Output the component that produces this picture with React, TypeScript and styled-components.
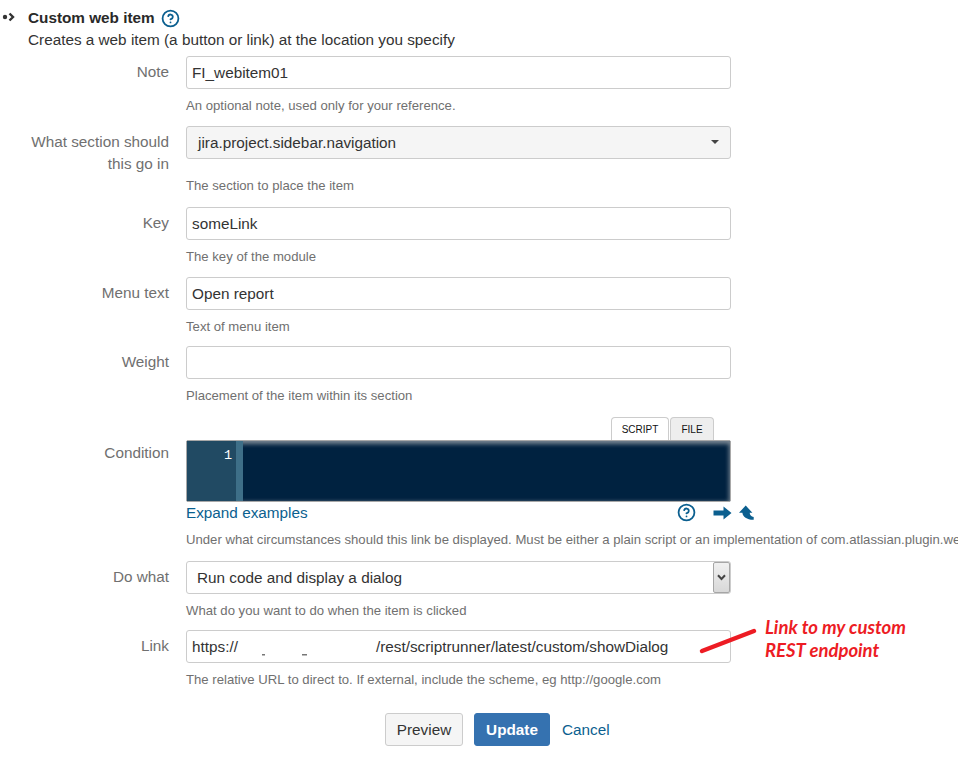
import React from 'react';
import styled, { createGlobalStyle } from 'styled-components';
import { CircleHelp } from 'lucide-react';

const GlobalStyle = createGlobalStyle`
  html, body {
    margin: 0;
    padding: 0;
    background: #fff;
    overflow: hidden;
  }
  body {
    font-family: "Liberation Sans", Arial, sans-serif;
    color: #333;
  }
`;

const Page = styled.div`
  width: 958px;
  height: 758px;
  overflow: hidden;
  padding-top: 8px;
  box-sizing: border-box;
`;

const Header = styled.div`
  display: grid;
  grid-template-columns: 28px 1fr;
  margin-bottom: 6px;
`;

const Bullet = styled.svg`
  width: 16px;
  height: 10px;
  margin-top: 4px;
`;

const TitleLine = styled.div`
  display: flex;
  align-items: center;
  gap: 6px;
  height: 20px;
  font-size: 15.3px;
  font-weight: bold;
  color: #292929;
`;

const Subtitle = styled.div`
  grid-column: 2;
  margin-top: 2px;
  font-size: 15.3px;
  line-height: 20px;
`;

const Row = styled.div<{ $gap?: number }>`
  display: grid;
  grid-template-columns: 169px 545px;
  column-gap: 17px;
  margin-bottom: ${(p) => p.$gap ?? 11}px;
`;

const Label = styled.div<{ $top?: number }>`
  padding-top: ${(p) => p.$top ?? 5}px;
  font-size: 15.3px;
  line-height: 22px;
  color: #707070;
  text-align: right;
`;

const Control = styled.div`
  position: relative;
  min-width: 0;
  padding-bottom: 6px;
`;

const TextBox = styled.div<{ $grey?: boolean; $indent?: number }>`
  position: relative;
  display: flex;
  align-items: center;
  height: 33px;
  box-sizing: border-box;
  padding-left: ${(p) => p.$indent ?? 5}px;
  border: 1px solid #ccc;
  border-radius: 3px;
  background: ${(p) => (p.$grey ? '#f5f5f5' : '#fff')};
  font-size: 15.3px;
  color: #333;
  white-space: nowrap;
`;

const Caret = styled.span`
  position: absolute;
  right: 11px;
  top: 13px;
  border-left: 4px solid transparent;
  border-right: 4px solid transparent;
  border-top: 4px solid #444;
`;

const NativeArrow = styled.span`
  position: absolute;
  right: 0;
  top: 0;
  bottom: 0;
  width: 17px;
  display: flex;
  align-items: center;
  justify-content: center;
  box-sizing: border-box;
  border: 1px solid #a6a6a6;
  border-radius: 2px;
  background: linear-gradient(#f0f0f0, #d8d8d8);
`;

const Help = styled.div`
  grid-column: 2;
  padding-top: 2px;
  font-size: 13.15px;
  line-height: 18px;
  color: #707070;
  white-space: nowrap;
`;

const Tabs = styled.div`
  display: flex;
  justify-content: flex-end;
  gap: 1px;
  padding-right: 17px;
  height: 23px;
`;

const Tab = styled.div<{ $active?: boolean }>`
  display: flex;
  align-items: center;
  justify-content: center;
  width: ${(p) => (p.$active ? 58 : 44)}px;
  box-sizing: border-box;
  border: 1px solid #ccc;
  border-bottom: none;
  border-radius: 4px 4px 0 0;
  background: ${(p) => (p.$active ? '#fff' : '#eee')};
  font-size: 10px;
  color: #111;
`;

const Editor = styled.div`
  display: grid;
  grid-template-columns: 49px 7px 1fr;
  height: 62px;
  box-sizing: border-box;
  border: 1px solid #a8a8a8;
  border-radius: 2px;
  background: #002240;
  box-shadow: inset 0 2px 4px 1px rgba(200, 200, 200, 0.6);
`;

const Gutter = styled.div`
  background: #214a63;
  padding: 7px 4px 0 0;
  text-align: right;
  font-family: "Liberation Mono", monospace;
  font-size: 13.5px;
  line-height: 16px;
  color: #fff;
`;

const FoldBar = styled.div`
  background: #3e6f88;
`;

const EditorTools = styled.div`
  display: flex;
  align-items: center;
  height: 21px;
`;

const LinkText = styled.a`
  font-size: 15.3px;
  color: #0b5f8f;
  text-decoration: none;
`;

const ToolIcons = styled.div`
  display: flex;
  align-items: center;
  margin-left: auto;
  margin-right: -24px;
  color: #0b5f8f;
`;

const ToolArrows = styled.svg`
  width: 42px;
  height: 18px;
  margin-left: 17px;
`;

const Redacted = styled.svg`
  width: 138px;
  height: 20px;
  flex: none;
`;

const Annotation = styled.div`
  position: absolute;
  left: 579px;
  top: -14px;
  font-family: Lato, "Liberation Sans", sans-serif;
  font-size: 18.5px;
  font-style: italic;
  font-weight: bold;
  line-height: 23px;
  color: #ed1c24;
  white-space: nowrap;
`;

const Pointer = styled.svg`
  position: absolute;
  left: 510px;
  top: -4px;
  width: 64px;
  height: 32px;
`;

const Actions = styled.div`
  display: flex;
  align-items: center;
  padding-left: 385px;
  margin-top: 24px;
`;

const Button = styled.button<{ $primary?: boolean }>`
  height: 33px;
  box-sizing: border-box;
  padding: 0;
  width: ${(p) => (p.$primary ? 76 : 78)}px;
  margin-right: ${(p) => (p.$primary ? 12 : 11)}px;
  border: 1px solid ${(p) => (p.$primary ? '#3572b0' : '#ccc')};
  border-radius: 3px;
  background: ${(p) => (p.$primary ? '#3572b0' : '#f5f5f5')};
  color: ${(p) => (p.$primary ? '#fff' : '#333')};
  font-family: inherit;
  font-size: 15.3px;
  font-weight: ${(p) => (p.$primary ? 'bold' : 'normal')};
`;

interface FieldProps {
  label: React.ReactNode;
  help: string;
  gap?: number;
  labelTop?: number;
  children: React.ReactNode;
}

const Field: React.FC<FieldProps> = ({ label, help, gap, labelTop, children }) => (
  <Row $gap={gap}>
    <Label $top={labelTop}>{label}</Label>
    <Control>{children}</Control>
    <Help>{help}</Help>
  </Row>
);

export default function App() {
  return (
    <Page>
      <GlobalStyle />
      <Header>
        <Bullet viewBox="0 0 16 10">
          <circle cx="5" cy="5" r="2.2" fill="#333" />
          <path d="M9.5 1.5 L13 5 L9.5 8.5" fill="none" stroke="#333" strokeWidth="2.4" />
        </Bullet>
        <TitleLine>
          Custom web item
          <CircleHelp size={19} color="#0b5f8f" strokeWidth={2.25} />
        </TitleLine>
        <Subtitle>Creates a web item (a button or link) at the location you specify</Subtitle>
      </Header>

      <Field label="Note" help="An optional note, used only for your reference.">
        <TextBox>FI_webitem01</TextBox>
      </Field>
      <Field label={<>What section should<br />this go in</>} help="The section to place the item" gap={12}>
        <TextBox $grey $indent={11}>
          jira.project.sidebar.navigation
          <Caret />
        </TextBox>
      </Field>
      <Field label="Key" help="The key of the module">
        <TextBox>someLink</TextBox>
      </Field>
      <Field label="Menu text" help="Text of menu item" gap={10}>
        <TextBox>Open report</TextBox>
      </Field>
      <Field label="Weight" help="Placement of the item within its section" gap={12}>
        <TextBox />
      </Field>
      <Field
        label="Condition"
        help="Under what circumstances should this link be displayed. Must be either a plain script or an implementation of com.atlassian.plugin.web.conditions.Condition"
        labelTop={25}
        gap={12}
      >
        <Tabs>
          <Tab $active>SCRIPT</Tab>
          <Tab>FILE</Tab>
        </Tabs>
        <Editor>
          <Gutter>1</Gutter>
          <FoldBar />
          <div />
        </Editor>
        <EditorTools>
          <LinkText>Expand examples</LinkText>
          <ToolIcons>
            <CircleHelp size={19} strokeWidth={2.25} />
            <ToolArrows viewBox="0 0 42 18">
              <path d="M0.5 6.5 H10.5 V2.5 L18.5 9 L10.5 15.5 V11.5 H0.5 Z" fill="currentColor" />
              <path d="M32.7 1.5 L26 8.8 H29.4 C29.7 13 34.2 16 40.7 15.8 V13 C38.2 12.5 36.7 11 36.7 8.8 H39.4 Z" fill="currentColor" />
            </ToolArrows>
          </ToolIcons>
        </EditorTools>
      </Field>
      <Field label="Do what" help="What do you want to do when the item is clicked" gap={10}>
        <TextBox $indent={10}>
          Run code and display a dialog
          <NativeArrow>
            <svg width="9" height="7" viewBox="0 0 9 7">
              <path d="M1 1.2 L4.5 5 L8 1.2" fill="none" stroke="#444" strokeWidth="2" />
            </svg>
          </NativeArrow>
        </TextBox>
      </Field>
      <Field
        label="Link"
        help="The relative URL to direct to. If external, include the scheme, eg http://google.com"
      >
        <TextBox>
          https://
          <Redacted viewBox="0 0 138 20">
            <rect x="24" y="17" width="3" height="1.5" fill="#777" />
            <rect x="64" y="17" width="5" height="1.5" fill="#777" />
          </Redacted>
          /rest/scriptrunner/latest/custom/showDialog
        </TextBox>
        <Pointer viewBox="0 0 64 32">
          <path d="M6 25 L58 5" stroke="#ed1c24" strokeWidth="4.5" strokeLinecap="round" />
        </Pointer>
        <Annotation>
          Link to my custom
          <br />
          REST endpoint
        </Annotation>
      </Field>
      <Actions>
        <Button>Preview</Button>
        <Button $primary>Update</Button>
        <LinkText>Cancel</LinkText>
      </Actions>
    </Page>
  );
}
